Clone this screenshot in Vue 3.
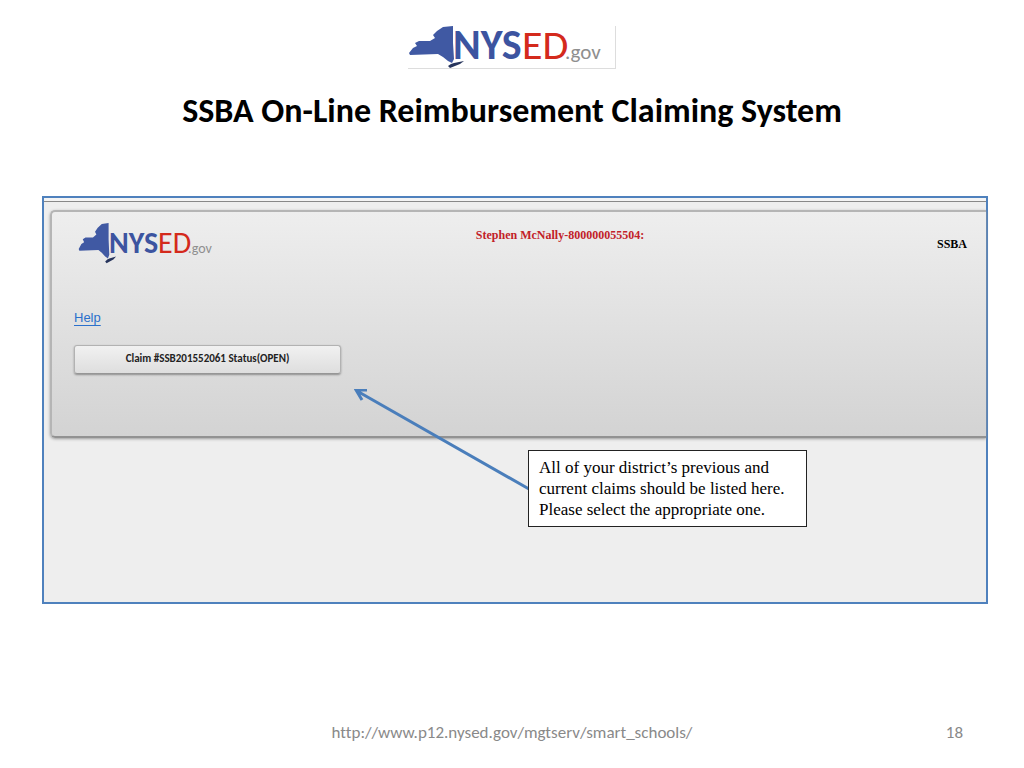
<script setup>
const claims = [{ id: 'SSB201552061', status: 'OPEN' }]
const noteLines = [
  'All of your district’s previous and',
  'current claims should be listed here.',
  'Please select the appropriate one.',
]
const statePath =
  'M1 27 L5 22 L9 20 L7 17 L11 15 L22 15 L27 12 L25 9 L29 5 L35 1 L45 0 L45 17 L46 33 L44 37 L40 35 L35 31 L30 28 L2 29 Z'
const islandPath = 'M40 40 L43 38 L46 37 L56 35 L52 38 L42 42 Z'
</script>

<template>
  <main class="slide">
    <div class="brand">
      <svg class="brand-logo" viewBox="0 0 207 42" role="img" aria-label="NYSED.gov">
        <path class="state" :d="statePath" />
        <path class="island" :d="islandPath" />
        <text class="nys" x="45" y="33">NYS</text>
        <text class="ed" x="114" y="33">ED</text>
        <text class="gov" x="157" y="33">.gov</text>
      </svg>
    </div>
    <h1>SSBA On-Line Reimbursement Claiming System</h1>

    <section class="frame">
      <div class="panel">
        <header class="panel-head">
          <svg class="panel-logo" viewBox="0 0 136 44" role="img" aria-label="NYSED.gov">
            <g transform="translate(0 1) scale(0.68 0.96)">
              <path class="state" :d="statePath" />
              <path class="island" :d="islandPath" />
            </g>
            <text class="nys" x="31" y="31">NYS</text>
            <text class="ed" x="80" y="31">ED</text>
            <text class="gov" x="110" y="31">.gov</text>
          </svg>
          <strong class="user">Stephen McNally-800000055504:</strong>
          <strong class="app-name">SSBA</strong>
        </header>
        <a class="help" href="#help">Help</a>
        <button v-for="c in claims" :key="c.id" class="claim" type="button">
          Claim #{{ c.id }} Status({{ c.status }})
        </button>
      </div>

      <svg class="arrow" viewBox="0 0 176 102" aria-hidden="true">
        <path d="M175 100 L3 2 M13 1 L2 1 L8 11" />
      </svg>
      <p class="note">
        <span v-for="line in noteLines" :key="line">{{ line }}</span>
      </p>
    </section>

    <footer>
      <span class="url">http://www.p12.nysed.gov/mgtserv/smart_schools/</span>
      <span class="page">18</span>
    </footer>
  </main>
</template>

<style>
body {
  margin: 0;
  background: #fff;
}
</style>

<style scoped>
.slide {
  box-sizing: border-box;
  min-height: 100vh;
  padding: 26px 36px 24px 42px;
  display: flex;
  flex-direction: column;
  font-family: Carlito, Lato, sans-serif;
  font-variant-ligatures: none;
}
.brand {
  display: flex;
  justify-content: center;
  padding-right: 6px;
}
.brand-logo {
  box-sizing: border-box;
  width: 208px;
  height: 43px;
  border-right: 1px solid #ddd;
  border-bottom: 1px solid #ddd;
  overflow: visible;
}
.state {
  fill: #4059a3;
}
.island {
  fill: #26345c;
}
.nys {
  font-size: 42px;
  font-weight: 700;
  fill: #3c54a0;
}
.ed {
  font-size: 42px;
  fill: #d42a1c;
}
.gov {
  font-size: 21px;
  fill: #8f8f8f;
}
.panel-logo .nys,
.panel-logo .ed {
  font-size: 30px;
}
.panel-logo .gov {
  font-size: 14px;
}
h1 {
  margin: 22px 6px 65px 0;
  font-size: 34px;
  line-height: 40px;
  font-weight: 700;
  text-align: center;
  white-space: nowrap;
  color: #000;
}
.frame {
  position: relative;
  box-sizing: border-box;
  min-height: 408px;
  padding-top: 4px;
  border: 2px solid #4f81bd;
  background: linear-gradient(#f4f4f4 3px, #888 3px, #888 4px, #eee 4px);
}
.panel {
  box-sizing: border-box;
  height: 228px;
  margin: 8px 0 0 6px;
  padding: 10px 19px 0 22px;
  border: solid #b5b5b5;
  border-width: 2px 0 2px 2px;
  border-bottom-color: #929292;
  border-radius: 5px 0 0 5px;
  background: linear-gradient(#eee, #d3d3d3);
  box-shadow: 0 1px 3px #999;
  display: flex;
  flex-direction: column;
  align-items: flex-start;
}
.panel-head {
  width: 100%;
  display: grid;
  grid-template-columns: 45% auto 1fr;
  align-items: start;
}
.panel-logo {
  width: 136px;
  height: 44px;
  margin-left: 4px;
}
.user {
  padding-top: 3px;
  color: #c22128;
  font: 700 12px/20px "Liberation Serif", serif;
}
.app-name {
  justify-self: end;
  padding-top: 12px;
  font: 700 12px/20px "Liberation Serif", serif;
}
.help {
  margin-top: 41px;
  color: #2a70cc;
  font: 13px/22px "Liberation Sans", sans-serif;
  text-underline-offset: 3px;
}
.claim {
  width: 267px;
  height: 29px;
  margin-top: 16px;
  padding: 0 0 2px;
  border: 1px solid #b2b2b2;
  border-bottom-color: #969696;
  border-radius: 3px;
  background: linear-gradient(#f1f1f1, #dedede);
  box-shadow: 0 1px 2px #8e8e8e;
  color: #222;
  font: 700 11px/20px Carlito, "Liberation Sans", sans-serif;
}
.arrow {
  position: absolute;
  left: 310px;
  top: 191px;
  width: 176px;
  height: 102px;
  fill: none;
  stroke: #4a7ebb;
  stroke-width: 3;
}
.note {
  position: absolute;
  left: 484px;
  top: 252px;
  box-sizing: border-box;
  width: 279px;
  margin: 0;
  padding: 6px 10px;
  border: 1px solid #222;
  background: #fff;
  color: #000;
  font: 17px/21px "Liberation Serif", serif;
}
.note span {
  display: block;
  white-space: nowrap;
}
footer {
  display: grid;
  grid-template-columns: 1fr auto 1fr;
  margin-top: auto;
  padding-right: 6px;
  color: #898989;
  font-size: 17px;
  line-height: 22px;
}
.url {
  grid-column: 2;
}
.page {
  justify-self: end;
  padding-right: 19px;
}
</style>
